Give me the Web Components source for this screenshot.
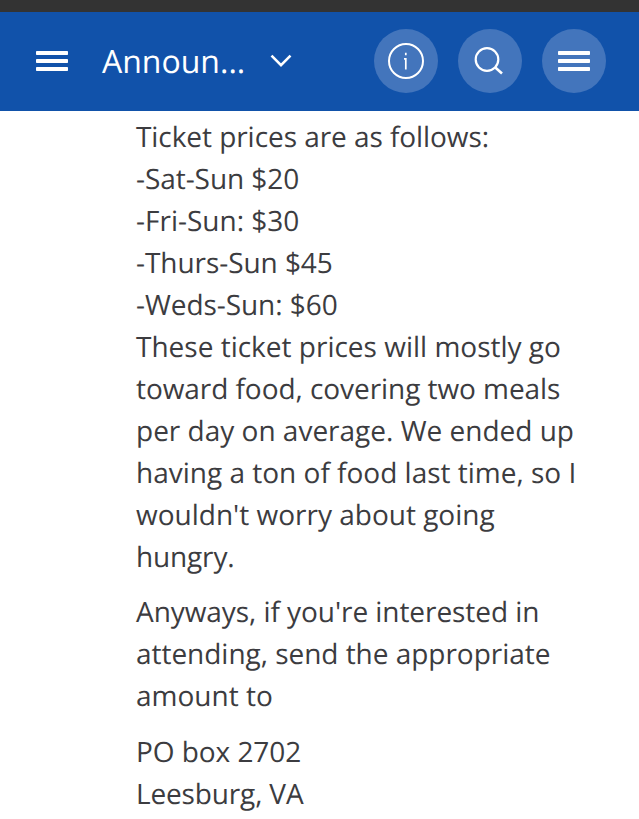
<!DOCTYPE html>
<html lang="en"><head><meta charset="utf-8"><title>Announcements</title>
<style>html,body{margin:0;height:819px;overflow:hidden;background:#fff}body{font-family:"Open Sans",sans-serif;text-rendering:geometricPrecision}</style></head>
<body><forum-page></forum-page>
<script>
customElements.define('round-button',class extends HTMLElement{constructor(){super();this.attachShadow({mode:'open'}).innerHTML=`<style>:host{display:flex;width:64px;height:64px;border-radius:50%;background:#4375bc;align-items:center;justify-content:center}</style><slot></slot>`}});
customElements.define('menu-icon',class extends HTMLElement{constructor(){super();this.attachShadow({mode:'open'}).innerHTML=`<style>:host{display:flex;flex-direction:column;gap:4px;width:32px;flex:none}i{height:4px;border-radius:.7px;background:#fff}</style><i></i><i></i><i></i>`}});
customElements.define('top-bar',class extends HTMLElement{constructor(){super();this.attachShadow({mode:'open'}).innerHTML=`<style>
:host{display:flex;box-sizing:border-box;height:99px;background:#1152aa;align-items:center;padding:0 33px 1px 36px;color:#fff}
svg{display:block;fill:none;stroke:#fff;flex:none}.title{font-size:32px;line-height:44px;padding-top:2px;width:143px;margin-left:34px;white-space:nowrap}.chev{margin-left:25px}.actions{display:flex;gap:20px;margin-left:auto}</style>
<menu-icon></menu-icon>
<span class="title">Announ...</span>
<svg class="chev" width="22" height="14" stroke-width="2.6"><path d="M1.5 1.7L11 11.2L20.5 1.7"/></svg>
<div class="actions">
<round-button><svg width="38" height="38" viewBox="0 0 38 38" stroke-width="2"><circle cx="19" cy="19" r="17"/><path d="M17 16.8H18.8V27.4M18.8 10.8V13.3" stroke-width="1.7"/></svg></round-button>
<round-button><svg width="32" height="32" viewBox="0 0 32 32" stroke-width="2.2"><circle cx="13" cy="14.5" r="11.3"/><path d="M21.3 22.5L28 28.4" stroke-width="2.6"/></svg></round-button>
<round-button><menu-icon></menu-icon></round-button>
</div>`}});
customElements.define('post-body',class extends HTMLElement{constructor(){super();this.attachShadow({mode:'open'}).innerHTML=`<style>:host{display:flex;flex-direction:column;padding:5px 0 0 136px;color:#3c3c40;font-size:28px;line-height:42px;white-space:nowrap}</style><slot></slot>`}});
customElements.define('forum-page',class extends HTMLElement{constructor(){super();this.attachShadow({mode:'open'}).innerHTML=`<style>:host{display:block}.status{height:12px;background:#333}p{margin:0}p+p{margin-top:13px}p+p+p{margin-top:14px}.snug{letter-spacing:-.06px}.tight{letter-spacing:-.15px}</style>
<div class="status"></div><top-bar></top-bar><post-body><p><span class="snug">Ticket prices are as follows:</span><br><span class="snug">-Sat-Sun $20</span><br>-Fri-Sun: $30<br><span class="snug">-Thurs-Sun $45</span><br><span class="snug">-Weds-Sun: $60</span><br>These ticket prices will mostly go<br><span class="snug">toward food, covering two meals</span><br>per day on average. We ended up<br>having a ton of food last time, so I<br>wouldn't worry about going<br><span class="tight">hungry.</span></p><p><span class="snug">Anyways, if you're interested in</span><br><span style="letter-spacing:-.03px">attending, send the appropriate</span><br>amount to</p><p><span class="snug">PO box 2702</span><br><span class="tight">Leesburg, VA</span></p></post-body>`}});
</script></body></html>
